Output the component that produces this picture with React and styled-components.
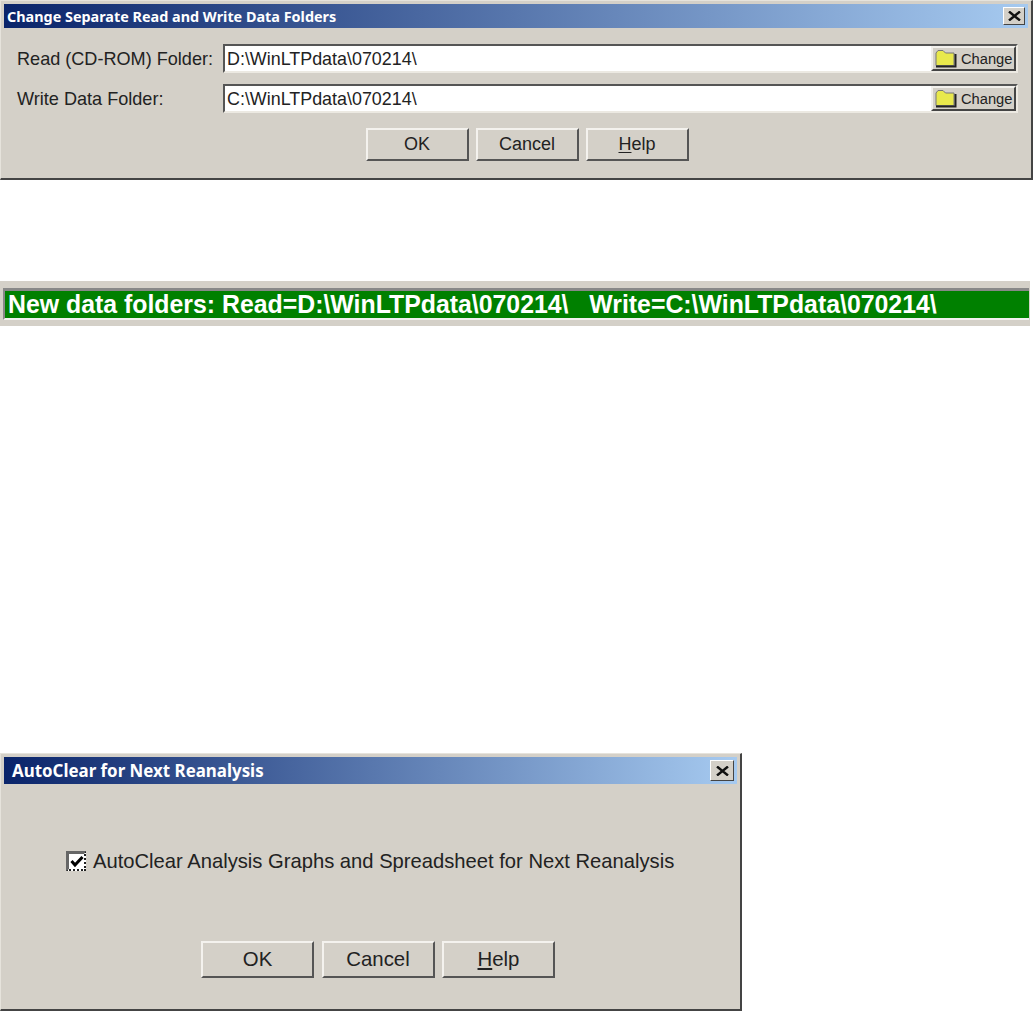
import React from "react";
import styled, { createGlobalStyle } from "styled-components";

const GlobalStyle = createGlobalStyle`
  html, body { margin: 0; padding: 0; background: #fff; }
  body { font-family: "Liberation Sans", Arial, sans-serif; color: #222; }
`;

const Page = styled.div`
  width: 1033px;
  height: 1011px;
  overflow: hidden;
  display: flex;
  flex-direction: column;
`;

const Dialog = styled.section`
  box-sizing: border-box;
  width: ${(p) => p.$width}px;
  height: ${(p) => p.$height}px;
  margin-top: ${(p) => p.$top || 0}px;
  padding: 3px 3px 0;
  background: #d4d0c8;
  border-top: 1px solid #e6e3dc;
  border-left: 1px solid #e6e3dc;
  border-right: 2px solid #444;
  border-bottom: 2px solid #444;
  display: flex;
  flex-direction: column;
`;

const TitleBar = styled.header`
  flex: none;
  box-sizing: border-box;
  height: ${(p) => p.$height}px;
  padding: 0 3px 0 ${(p) => p.$pad}px;
  display: flex;
  align-items: center;
  justify-content: space-between;
  background: linear-gradient(90deg, #0a246a 0%, #a6caf0 100%);
`;

const Title = styled.h1`
  margin: 0;
  font-family: "Noto Sans", "Open Sans", sans-serif;
  font-size: ${(p) => p.$size}px;
  font-weight: 700;
  color: #fff;
  white-space: nowrap;
`;

const CloseButton = styled.button`
  box-sizing: border-box;
  width: ${(p) => p.$w}px;
  height: ${(p) => p.$h}px;
  padding: 0;
  display: flex;
  align-items: center;
  justify-content: center;
  background: #d4d0c8;
  border: 1px solid;
  border-color: #fff #444 #444 #fff;
`;

const FolderRows = styled.div`
  display: flex;
  flex-direction: column;
  gap: 11px;
  padding: 16px 10px 0 13px;
`;

const FolderRow = styled.div`
  display: flex;
  align-items: center;
`;

const RowLabel = styled.label`
  flex: none;
  width: 206px;
  padding-top: 2px;
  font-size: 18.1px;
  white-space: nowrap;
`;

const PathField = styled.div`
  flex: 1;
  box-sizing: border-box;
  height: 29px;
  display: flex;
  align-items: center;
  justify-content: space-between;
  padding-left: 2px;
  background: #fff;
  border: 2px solid;
  border-color: #555 #ece9e2 #ece9e2 #555;
  font-size: 17.9px;
`;

const PathText = styled.span`
  padding-top: 2px;
`;

const ChangeButton = styled.button`
  box-sizing: border-box;
  width: 85px;
  height: 25px;
  padding: 0 0 0 2px;
  display: flex;
  align-items: center;
  gap: 4px;
  font: 14.7px "Liberation Sans", Arial, sans-serif;
  color: #222;
  background: #d4d0c8;
  border: 2px solid;
  border-color: #f2f0ec #444 #444 #f2f0ec;
`;

const ButtonRow = styled.div`
  display: flex;
  justify-content: center;
  gap: ${(p) => p.$gap}px;
  margin-top: ${(p) => p.$top}px;
  padding-left: ${(p) => p.$shift || 0}px;
`;

const DialogButton = styled.button`
  box-sizing: border-box;
  width: ${(p) => p.$width}px;
  height: ${(p) => p.$height}px;
  padding: 0;
  font: ${(p) => p.$size}px "Liberation Sans", Arial, sans-serif;
  color: #222;
  background: #d4d0c8;
  border: 2px solid;
  border-color: #f4f2ee #555 #555 #f4f2ee;
  u { text-underline-offset: 2px; }
`;

const StatusStrip = styled.div`
  box-sizing: border-box;
  width: 1030px;
  height: 45px;
  margin-top: 101px;
  padding: 7px 1px 6px 3px;
  background: #d4d0c8;
`;

const StatusText = styled.div`
  box-sizing: border-box;
  height: 100%;
  padding-left: 3px;
  display: flex;
  align-items: center;
  background: #008000;
  border-top: 3px solid #888;
  border-left: 2px solid #888;
  border-bottom: 2px solid #f2f2f0;
  color: #fff;
  font-size: 24.85px;
  font-weight: 700;
  white-space: pre;
`;

const CheckRow = styled.div`
  display: flex;
  align-items: center;
  gap: 7px;
  margin-top: 64px;
  padding-left: 62px;
`;

const CheckBox = styled.span`
  box-sizing: border-box;
  width: 20px;
  height: 20px;
  display: flex;
  align-items: center;
  justify-content: center;
  background: #fff;
  border-top: 3px solid #666;
  border-left: 3px solid #666;
  border-right: 2px dotted #222;
  border-bottom: 2px dotted #222;
`;

const CheckText = styled.span`
  padding-top: 2px;
  font-size: 20.2px;
  white-space: nowrap;
`;

const CloseIcon = () => (
  <svg width="13" height="10" viewBox="0 0 13 10">
    <path d="M1 0.5 L12 9.5 M12 0.5 L1 9.5" stroke="#111" strokeWidth="2.4" fill="none" />
  </svg>
);

const FolderIcon = () => (
  <svg width="22" height="19" viewBox="0 0 22 19">
    <path d="M1 4 L3 1.5 H8 L10.5 4 H19 V16.5 H1 Z" fill="#e8e84c" stroke="#777" />
    <path d="M1 17.5 H20.5 V5" fill="none" stroke="#222" strokeWidth="2" />
  </svg>
);

const CheckMark = () => (
  <svg width="14" height="13" viewBox="0 0 14 13">
    <path d="M1.5 6 L5 10 L12.5 2" stroke="#000" strokeWidth="3" fill="none" />
  </svg>
);

const folders = [
  { label: "Read (CD-ROM) Folder:", path: "D:\\WinLTPdata\\070214\\" },
  { label: "Write Data Folder:", path: "C:\\WinLTPdata\\070214\\" },
];

const Buttons = ({ width, height, size, gap, top, shift }) => (
  <ButtonRow $gap={gap} $top={top} $shift={shift}>
    <DialogButton $width={width} $height={height} $size={size}>OK</DialogButton>
    <DialogButton $width={width} $height={height} $size={size}>Cancel</DialogButton>
    <DialogButton $width={width} $height={height} $size={size}><u>H</u>elp</DialogButton>
  </ButtonRow>
);

export default function App() {
  return (
    <Page>
      <GlobalStyle />
      <Dialog $width={1033} $height={180}>
        <TitleBar $height={24} $pad={3}>
          <Title $size={14.4}>Change Separate Read and Write Data Folders</Title>
          <CloseButton $w={22} $h={18}><CloseIcon /></CloseButton>
        </TitleBar>
        <FolderRows>
          {folders.map((f) => (
            <FolderRow key={f.label}>
              <RowLabel>{f.label}</RowLabel>
              <PathField>
                <PathText>{f.path}</PathText>
                <ChangeButton><FolderIcon />Change</ChangeButton>
              </PathField>
            </FolderRow>
          ))}
        </FolderRows>
        <Buttons width={103} height={33} size={18} gap={7} top={15} shift={22} />
      </Dialog>

      <StatusStrip>
        <StatusText>{"New data folders: Read=D:\\WinLTPdata\\070214\\   Write=C:\\WinLTPdata\\070214\\"}</StatusText>
      </StatusStrip>

      <Dialog $width={742} $height={258} $top={427}>
        <TitleBar $height={27} $pad={8}>
          <Title $size={16.9}>AutoClear for Next Reanalysis</Title>
          <CloseButton $w={24} $h={21}><CloseIcon /></CloseButton>
        </TitleBar>
        <CheckRow>
          <CheckBox><CheckMark /></CheckBox>
          <CheckText>AutoClear Analysis Graphs and Spreadsheet for Next Reanalysis</CheckText>
        </CheckRow>
        <Buttons width={113} height={37} size={20.4} gap={7.5} top={68} shift={15} />
      </Dialog>
    </Page>
  );
}
